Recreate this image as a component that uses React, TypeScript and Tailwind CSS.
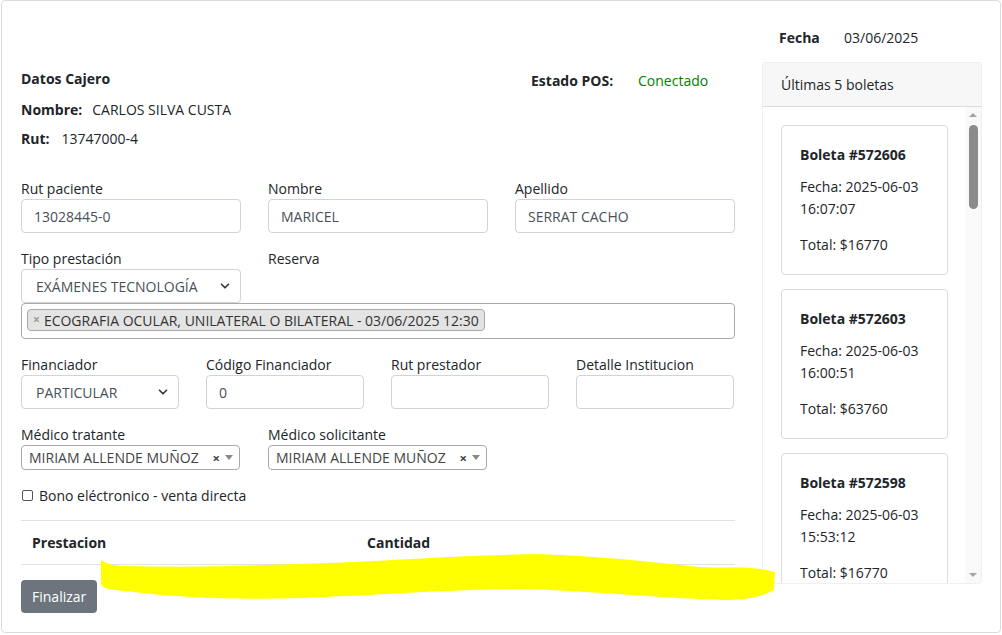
import { ChevronDown } from 'lucide-react';

const boletas = [
  { id: 572606, fecha: '2025-06-03', hora: '16:07:07', total: 16770 },
  { id: 572603, fecha: '2025-06-03', hora: '16:00:51', total: 63760 },
  { id: 572598, fecha: '2025-06-03', hora: '15:53:12', total: 16770 },
];

function Field({ label, value, w }: { label: string; value?: string; w: string }) {
  return (
    <div className={w}>
      <label className="block leading-[21px]">{label}</label>
      <div className="h-[34px] border border-[#ced4da] rounded-[4px] px-[12px] flex items-center text-[#495057]">
        {value}
      </div>
    </div>
  );
}

function FakeSelect({ label, value, w }: { label: string; value: string; w: string }) {
  return (
    <div className={w}>
      <label className="block leading-[21px]">{label}</label>
      <div className="h-[34px] border border-[#ced4da] rounded-[4px] pl-[14px] pr-[8px] flex items-center justify-between text-[#495057]">
        <span>{value}</span>
        <ChevronDown size={14} strokeWidth={3} className="text-[#343a40]" />
      </div>
    </div>
  );
}

function Select2({ label, value }: { label: string; value: string }) {
  return (
    <div className="w-[219px]">
      <label className="block leading-[21px]">{label}</label>
      <div className="h-[25px] border border-[#aaa] rounded-[4px] pl-[7px] pr-[6px] flex items-center text-[#444]">
        <span className="flex-1">{value}</span>
        <span className="text-[#444] font-bold text-[13px] mr-[5px] mt-[2px]">×</span>
        <span className="w-0 h-0 border-l-[4px] border-r-[4px] border-t-[5px] border-l-transparent border-r-transparent border-t-[#888]" />
      </div>
    </div>
  );
}

export default function App() {
  return (
    <div className="w-[1002px] h-[635px] bg-white relative text-[14px] text-[#212529] font-['Open_Sans',sans-serif]">
      <div className="ml-px w-[1000px] h-[633px] border border-[#dcdcdc] rounded-[4px] flex pl-[19px] pr-[17px]">
        {/* columna izquierda */}
        <div className="w-[714px] pt-[67px]">
          <div className="flex">
            <div className="w-[510px]">
              <p className="font-bold leading-[21px]">Datos Cajero</p>
              <p className="leading-[21px] mt-[10px]">
                <b>Nombre:</b>
                <span className="ml-[10px]">CARLOS SILVA CUSTA</span>
              </p>
              <p className="leading-[21px] mt-[8px]">
                <b>Rut:</b>
                <span className="ml-[12px]">13747000-4</span>
              </p>
            </div>
            <div className="flex pt-[2px] leading-[21px]">
              <b className="w-[107px]">Estado POS:</b>
              <span className="text-[#008000]">Conectado</span>
            </div>
          </div>

          <div className="flex gap-[27px] mt-[29px]">
            <Field label="Rut paciente" value="13028445-0" w="w-[220px]" />
            <Field label="Nombre" value="MARICEL" w="w-[220px]" />
            <Field label="Apellido" value="SERRAT CACHO" w="w-[220px]" />
          </div>

          <div className="flex gap-[27px] mt-[15px]">
            <FakeSelect label="Tipo prestación" value="EXÁMENES TECNOLOGÍA" w="w-[220px]" />
            <div>
              <label className="block leading-[21px]">Reserva</label>
            </div>
          </div>
          <div className="h-[36px] border border-[#aaa] rounded-[4px] px-[5px] pt-[4px]">
            <span className="inline-flex items-center h-[22px] bg-[#e4e4e4] border border-[#aaa] rounded-[4px] pl-[5px] pr-[5px] text-[#333]">
              <span className="text-[#999] font-bold mr-[4px] text-[12px]">×</span>
              ECOGRAFIA OCULAR, UNILATERAL O BILATERAL - 03/06/2025 12:30
            </span>
          </div>

          <div className="flex gap-[27px] mt-[15px]">
            <FakeSelect label="Financiador" value="PARTICULAR" w="w-[158px]" />
            <Field label="Código Financiador" value="0" w="w-[158px]" />
            <Field label="Rut prestador" w="w-[158px]" />
            <Field label="Detalle Institucion" w="w-[158px]" />
          </div>

          <div className="flex gap-[28px] mt-[15px]">
            <Select2 label="Médico tratante" value="MIRIAM ALLENDE MUÑOZ" />
            <Select2 label="Médico solicitante" value="MIRIAM ALLENDE MUÑOZ" />
          </div>

          <div className="flex items-center mt-[15px] leading-[21px]">
            <span className="w-[11px] h-[11px] border border-[#555] rounded-[2px] ml-[1px] mr-[6px]" />
            <span>Bono eléctronico - venta directa</span>
          </div>

          <div className="mt-[14px] border-t border-[#dee2e6]">
            <div className="flex h-[44px] items-center border-b border-[#dee2e6] font-bold">
              <span className="w-[346px] pl-[11px]">Prestacion</span>
              <span>Cantidad</span>
            </div>
          </div>

          <button className="mt-[15px] h-[33px] px-[11px] bg-[#6c757d] text-white rounded-[4px]">
            Finalizar
          </button>
        </div>

        {/* columna derecha */}
        <div className="w-[220px] ml-[27px] pt-[26px]">
          <div className="flex leading-[21px] pl-[17px]">
            <b className="w-[65px]">Fecha</b>
            <span>03/06/2025</span>
          </div>
          <div className="mt-[14px] border border-[#f0f0f0] rounded-[3px]">
            <div className="h-[44px] bg-[#f7f7f7] border-b border-[#dcdcdc] flex items-center pl-[18px]">
              Últimas 5 boletas
            </div>
            <div className="h-[476px] flex overflow-hidden">
              <div className="flex-1 pl-[18px] pt-[18px] flex flex-col gap-[14px]">
                {boletas.map((b) => (
                  <div
                    key={b.id}
                    className="w-[167px] h-[150px] shrink-0 border border-[#dcdcdc] rounded-[4px] px-[18px] pt-[18px]"
                  >
                    <p className="font-bold leading-[21px]">Boleta #{b.id}</p>
                    <p className="leading-[22px] mt-[11px]">
                      Fecha: {b.fecha}
                      <br />
                      {b.hora}
                    </p>
                    <p className="leading-[21px] mt-[14px]">Total: ${b.total}</p>
                  </div>
                ))}
              </div>
              <div className="w-[16px] bg-[#f9f9f9] flex flex-col items-center pt-[6px] pb-[6px]">
                <span className="w-0 h-0 border-l-[4px] border-r-[4px] border-b-[4px] border-l-transparent border-r-transparent border-b-[#a3a3a3]" />
                <span className="w-[9px] h-[84px] bg-[#8b8b8b] rounded-full mt-[8px]" />
                <span className="flex-1" />
                <span className="w-0 h-0 border-l-[4px] border-r-[4px] border-t-[4px] border-l-transparent border-r-transparent border-t-[#a3a3a3]" />
              </div>
            </div>
          </div>
        </div>
      </div>

      {/* trazo de resaltador amarillo */}
      <svg className="absolute left-0 top-0 pointer-events-none" width="1002" height="635">
        <path
          d="M101 560 C110 566 120 566 130 566 C200 568 260 565 330 563 C400 560 450 556 535 554 C600 556 640 561 700 567 C730 569 750 565 775 572 L774 590 C760 598 740 600 725 600 C660 598 600 592 550 590 C500 586 400 594 300 598 C240 600 180 598 125 591 C110 590 102 588 101 584 Z"
          fill="#ffff00"
        />
      </svg>
    </div>
  );
}
